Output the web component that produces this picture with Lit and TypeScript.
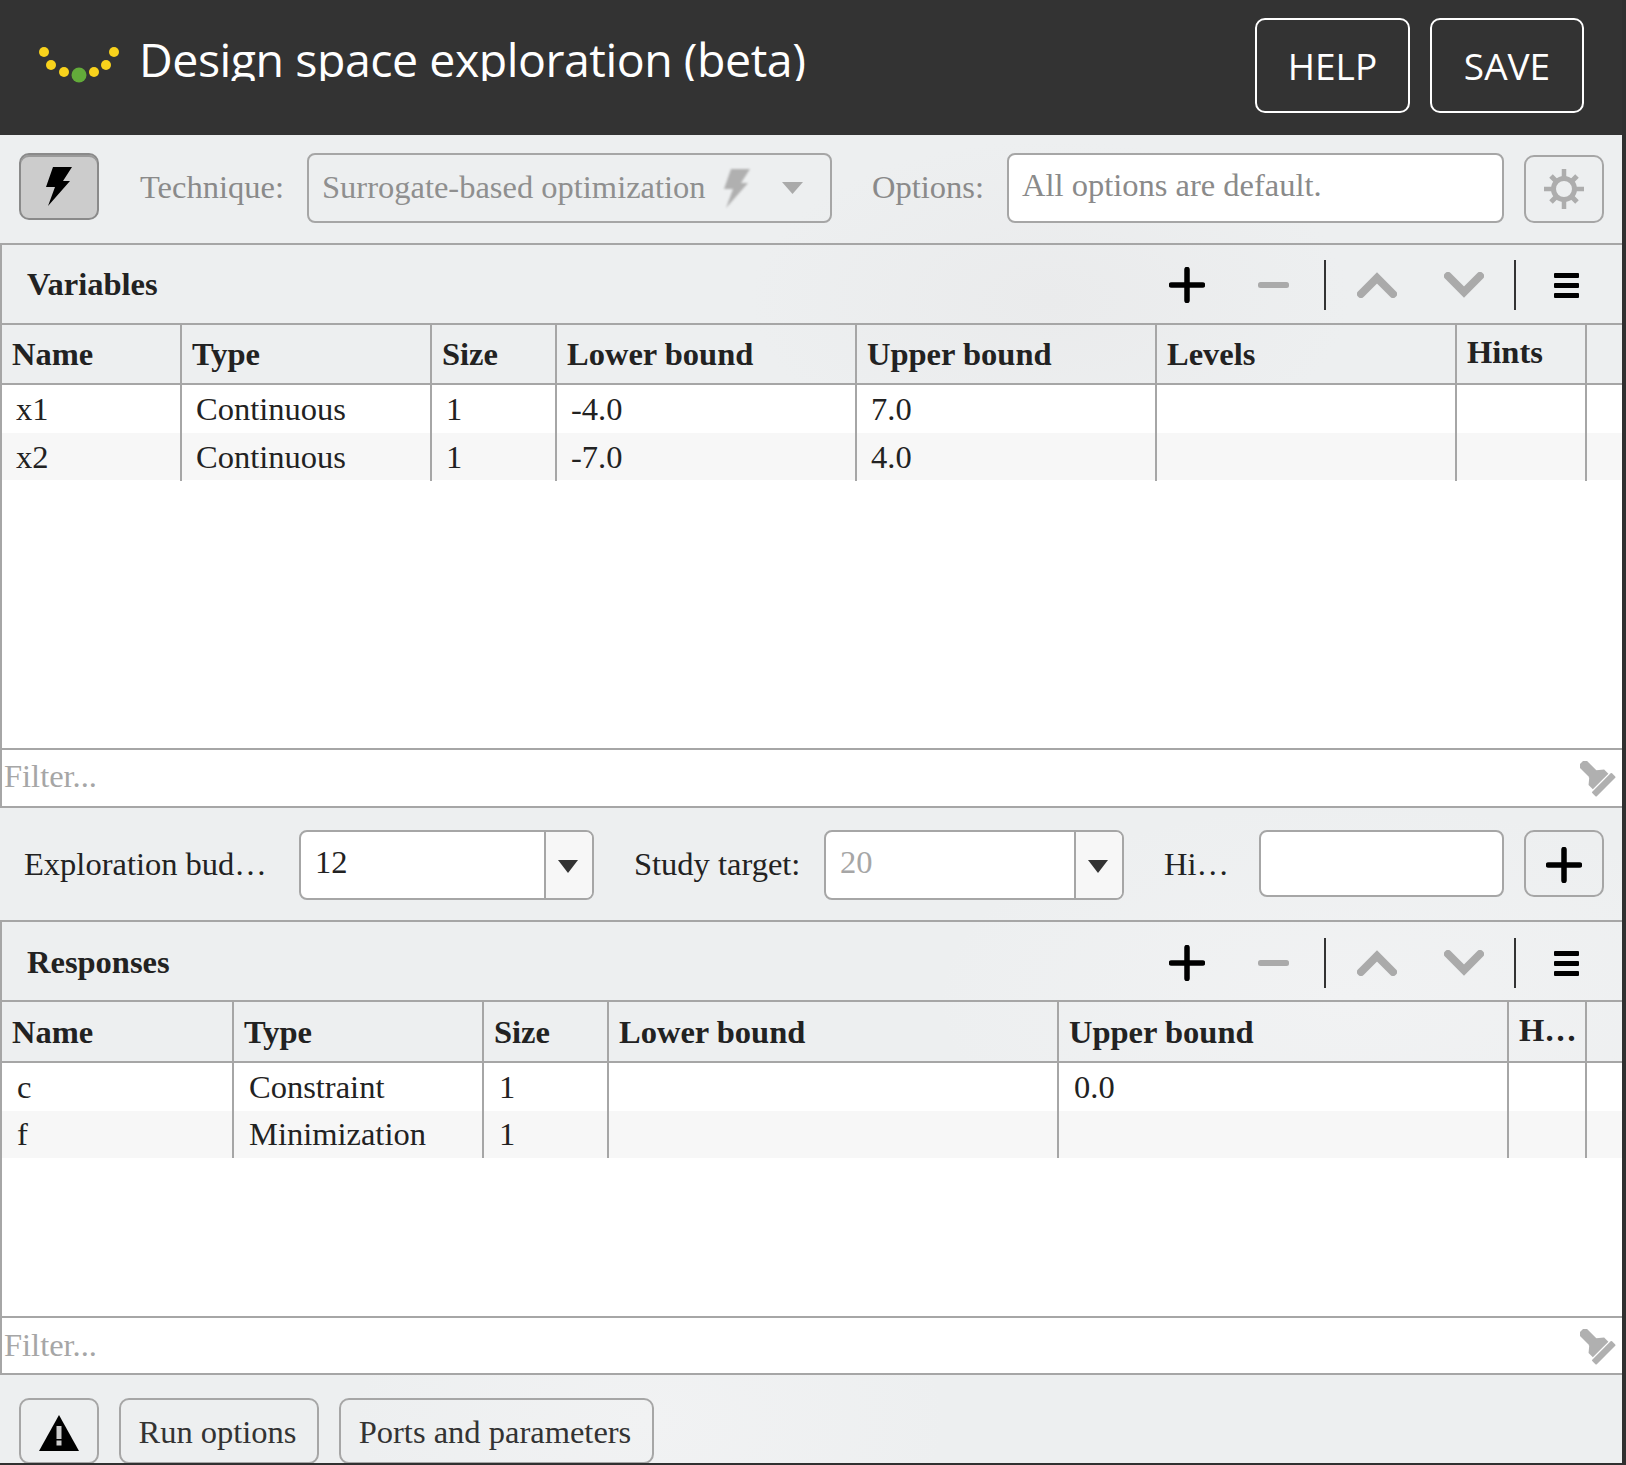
import {LitElement, css, html, svg} from 'lit';
import {customElement} from 'lit/decorators.js';

type Column = {label: string; width: number; raised?: boolean};

const VARIABLE_COLUMNS: Column[] = [
  {label: 'Name', width: 180},
  {label: 'Type', width: 250},
  {label: 'Size', width: 125},
  {label: 'Lower bound', width: 300},
  {label: 'Upper bound', width: 300},
  {label: 'Levels', width: 300},
  {label: 'Hints', width: 130, raised: true},
];

const RESPONSE_COLUMNS: Column[] = [
  {label: 'Name', width: 232},
  {label: 'Type', width: 250},
  {label: 'Size', width: 125},
  {label: 'Lower bound', width: 450},
  {label: 'Upper bound', width: 450},
  {label: 'H…', width: 78, raised: true},
];

const VARIABLE_ROWS = [
  ['x1', 'Continuous', '1', '-4.0', '7.0', '', ''],
  ['x2', 'Continuous', '1', '-7.0', '4.0', '', ''],
];

const RESPONSE_ROWS = [
  ['c', 'Constraint', '1', '', '0.0', ''],
  ['f', 'Minimization', '1', '', '', ''],
];

const bolt = svg`<polygon points="7,0 26,0 17,14 24,14 2,39 9,20 0,20" />`;

@customElement('app-root')
export class AppRoot extends LitElement {
  static styles = css`
    :host {
      display: block;
      width: 1626px;
      height: 1465px;
      overflow: hidden;
      background: #303030;
      font-family: 'Liberation Serif', 'Times New Roman', serif;
      font-size: 32.5px;
      color: #222;
    }

    .app {
      width: 1622px;
      height: 1463px;
      display: flex;
      flex-direction: column;
      overflow: hidden;
      background:
        radial-gradient(ellipse 300px 160px at 1050px 300px, #eaebec, transparent),
        radial-gradient(ellipse 420px 200px at 1350px 1000px, #f1f2f3, transparent),
        radial-gradient(ellipse 300px 180px at 650px 1420px, #f1f2f3, transparent),
        #edeff0;
    }

    /* top bar */
    .header {
      flex: none;
      height: 135px;
      background: #333;
      display: flex;
      align-items: flex-start;
      color: #fff;
    }

    .logo {
      flex: none;
      width: 140px;
      height: 135px;
      margin-right: -1px;
    }

    .title {
      flex: 1;
      margin-top: 31px;
      height: 50px;
      overflow: hidden;
      font-family: 'Open Sans', sans-serif;
      font-size: 46.5px;
      line-height: 56px;
      letter-spacing: -0.48px;
      white-space: nowrap;
    }

    .head-btn {
      flex: none;
      box-sizing: border-box;
      height: 95px;
      margin-top: 18px;
      border: 2px solid #fff;
      border-radius: 10px;
      display: flex;
      align-items: center;
      justify-content: center;
      font-family: 'Open Sans', sans-serif;
      font-size: 37px;
    }

    .help {
      width: 155px;
      margin-right: 20px;
    }

    .save {
      width: 154px;
      margin-right: 38px;
    }

    /* shared form bits */
    .row {
      flex: none;
      display: flex;
      align-items: flex-start;
      box-sizing: border-box;
    }

    .label {
      flex: none;
      height: 69px;
      line-height: 69px;
      white-space: nowrap;
    }

    .muted {
      color: #8a8a8a;
    }

    .box {
      flex: none;
      box-sizing: border-box;
      border: 2px solid #a6a6a6;
      border-radius: 8px;
      background: #fff;
      height: 70px;
      line-height: 60px;
      padding-left: 13px;
      white-space: nowrap;
    }

    .icon-btn {
      flex: none;
      box-sizing: border-box;
      width: 80px;
      height: 67px;
      border: 2px solid #a6a6a6;
      border-radius: 10px;
      display: flex;
      align-items: center;
      justify-content: center;
    }

    .tech-row {
      height: 108px;
      padding: 18px 0 0 19px;
    }

    .active {
      height: 67px;
      background: #ccc;
      border-color: #8a8a8a;
      box-shadow: inset 0 2px 0 #9a9a9a;
      margin-right: 41px;
    }

    .active svg {
      filter: blur(0.6px);
    }

    .tech-bolt {
      filter: blur(1px);
    }

    .tech-label {
      width: 167px;
    }

    .tech-select {
      width: 525px;
      background: transparent;
      color: #8f8f8f;
      display: flex;
      align-items: center;
      padding: 0 0 0 13px;
      line-height: normal;
    }

    .tech-select span {
      padding-bottom: 2px;
    }

    .tech-bolt {
      margin: 0 0 0 18px;
      fill: #b0b0b0;
    }

    .tech-arrow {
      margin-left: 32px;
      fill: #aaa;
      filter: blur(0.5px);
    }

    .opt-label {
      width: 135px;
      margin-left: 40px;
    }

    .opt-input {
      width: 497px;
      color: #8a8a8a;
      margin-right: 20px;
    }

    .gear {
      margin-top: 2px;
      height: 68px;
    }

    .gear svg {
      filter: blur(0.5px);
    }

    /* variables, responses */
    .panel {
      flex: none;
      box-sizing: border-box;
      display: flex;
      flex-direction: column;
      border-top: 2px solid #a6a6a6;
      border-bottom: 2px solid #a6a6a6;
      border-left: 2px solid #a6a6a6;
    }

    .variables {
      height: 565px;
    }

    .responses {
      height: 455px;
    }

    .bar {
      flex: none;
      height: 78px;
      display: flex;
      align-items: center;
      padding: 0 43px 0 25px;
    }

    .bar-title {
      flex: 1;
      font-weight: bold;
    }

    .responses .bar-title {
      padding-top: 2px;
    }

    .bar svg {
      flex: none;
      display: block;
      margin-top: 2px;
    }

    .sep {
      flex: none;
      width: 2px;
      height: 50px;
      margin-top: 2px;
      background: #333;
    }

    .responses .bar svg,
    .responses .sep {
      margin-top: 4px;
    }

    .ml-minus { margin-left: 53px; }
    .ml-sep1 { margin-left: 35px; }
    .ml-up { margin-left: 31px; }
    .ml-down { margin-left: 47px; }
    .ml-sep2 { margin-left: 30px; }
    .ml-menu { margin-left: 38px; }

    .grid {
      display: grid;
    }

    .thead {
      flex: none;
      box-sizing: border-box;
      height: 62px;
      border-top: 2px solid #a6a6a6;
      border-bottom: 2px solid #a6a6a6;
    }

    .responses .thead {
      height: 63px;
    }

    .th {
      box-sizing: border-box;
      border-right: 2px solid #a6a6a6;
      padding-left: 10px;
      font-weight: bold;
      line-height: 58px;
      white-space: nowrap;
      overflow: hidden;
    }

    .th.raised {
      line-height: 54px;
    }

    .responses .th {
      line-height: 60px;
    }

    .responses .th.raised {
      line-height: 56px;
    }

    .tbody {
      flex: 1;
      background: #fff;
    }

    .tr {
      height: 47.5px;
    }

    .tr.alt {
      background: #f7f7f7;
    }

    .td {
      box-sizing: border-box;
      border-right: 2px solid #a6a6a6;
      padding-left: 14px;
      line-height: 48px;
      white-space: nowrap;
    }

    .responses .td {
      padding-left: 15px;
    }

    .responses .alt .td {
      line-height: 46px;
    }

    .filter {
      flex: none;
      height: 58px;
      box-sizing: border-box;
      border-top: 2px solid #a6a6a6;
      background: #fff;
      color: #a6a6a6;
      display: flex;
      align-items: center;
      justify-content: space-between;
      padding: 0 5px 0 2px;
    }

    .filter span {
      padding-bottom: 3px;
    }

    .responses .filter {
      height: 57px;
    }

    .responses .filter span {
      padding-bottom: 0;
    }

    .filter svg {
      margin-top: 3px;
      filter: blur(0.4px);
    }

    /* budget row */
    .mid {
      height: 112px;
      padding: 22px 0 0 24px;
    }

    .combo {
      flex: none;
      box-sizing: border-box;
      height: 70px;
      border: 2px solid #a6a6a6;
      border-radius: 8px;
      overflow: hidden;
      display: flex;
      background: #fff;
    }

    .combo-value {
      flex: 1;
      padding-left: 14px;
      line-height: 60px;
    }

    .combo-arrow {
      flex: none;
      width: 48px;
      box-sizing: border-box;
      border-left: 2px solid #a6a6a6;
      padding-right: 3px;
      background: #f7f7f7;
      display: flex;
      align-items: center;
      justify-content: center;
      fill: #333;
    }

    .combo-arrow svg {
      margin-top: 2px;
      filter: blur(0.4px);
    }

    .budget-label { width: 275px; }
    .budget { width: 295px; }
    .target-label { width: 190px; margin-left: 40px; }
    .target { width: 300px; }
    .target .combo-value { color: #a6a6a6; }
    .hint-label { width: 95px; margin-left: 40px; }

    .hint-input {
      width: 245px;
      height: 67px;
      margin-right: 20px;
    }

    .add {
      padding-top: 2px;
    }

    /* bottom bar */
    .foot {
      flex: 1;
      padding: 23px 0 0 19px;
      gap: 20px;
    }

    .foot-btn {
      flex: none;
      box-sizing: border-box;
      height: 66px;
      padding: 2px 3px 0 0;
      border: 2px solid #a6a6a6;
      border-radius: 10px;
      display: flex;
      align-items: center;
      justify-content: center;
      color: #333;
    }

    .warn { width: 80px; padding: 0; }
    .warn svg { filter: blur(0.5px); margin-top: 3px; }
    .run { width: 200px; }
    .ports { width: 315px; }
  `;

  logo() {
    const dots = [
      [44, 52, 5], [51, 65, 5], [64, 72, 5], [94, 72, 5], [106, 65, 5], [114, 52, 5],
    ];
    return html`<svg class="logo" viewBox="0 0 140 135">
      ${dots.map(d => svg`<circle cx=${d[0]} cy=${d[1]} r=${d[2]} fill="#f8d21c" />`)}
      <circle cx="79" cy="75" r="7.5" fill="#63ab3a" />
    </svg>`;
  }

  plus(size = 36) {
    return html`<svg width=${size} height=${size} viewBox="0 0 36 36" fill="none" stroke="#000" stroke-width="5.5" stroke-linecap="round">
      <path d="M2.5 18H33.5M18 2.5V33.5" />
    </svg>`;
  }

  tools() {
    return html`
      ${this.plus()}
      <svg class="ml-minus" width="31" height="6" viewBox="0 0 31 6"><rect width="31" height="6" rx="2.5" fill="#aaa" /></svg>
      <div class="sep ml-sep1"></div>
      <svg class="ml-up" width="40" height="26" viewBox="0 0 40 26" fill="none" stroke="#aaa" stroke-width="8" stroke-linecap="round" stroke-linejoin="miter">
        <path d="M4 22L20 6L36 22" />
      </svg>
      <svg class="ml-down" width="40" height="26" viewBox="0 0 40 26" fill="none" stroke="#aaa" stroke-width="8" stroke-linecap="round" stroke-linejoin="miter">
        <path d="M4 4L20 20L36 4" />
      </svg>
      <div class="sep ml-sep2"></div>
      <svg class="ml-menu" width="25" height="25" viewBox="0 0 25 25" fill="#000">
        <rect width="25" height="5" rx="1" />
        <rect y="10" width="25" height="5" rx="1" />
        <rect y="20" width="25" height="5" rx="1" />
      </svg>
    `;
  }

  broom() {
    return html`<svg width="37" height="37" viewBox="0 0 37 37">
      <g transform="translate(22 22) rotate(-45)" fill="#b0b0b0">
        <rect x="-5" y="-29" width="10" height="18" rx="2" />
        <polygon points="-5,-13 5,-13 11,-8 11,-2 -11,-2 -11,-8" />
        <rect x="-14" y="-0.8" width="28" height="6.5" rx="1" />
      </g>
    </svg>`;
  }

  panel(cls: string, title: string, columns: Column[], rows: string[][]) {
    const template = columns.map(c => c.width + 'px').join(' ') + ' 1fr';
    return html`
      <section class="panel ${cls}">
        <div class="bar">
          <div class="bar-title">${title}</div>
          ${this.tools()}
        </div>
        <div class="grid thead" style="grid-template-columns: ${template}">
          ${columns.map(c => html`<div class="th ${c.raised ? 'raised' : ''}">${c.label}</div>`)}
        </div>
        <div class="tbody">
          ${rows.map((r, i) => html`
            <div class="grid tr ${i % 2 ? 'alt' : ''}" style="grid-template-columns: ${template}">
              ${r.map(v => html`<div class="td">${v}</div>`)}
            </div>
          `)}
        </div>
        <div class="filter">
          <span>Filter...</span>
          ${this.broom()}
        </div>
      </section>
    `;
  }

  combo(cls: string, value: string) {
    return html`
      <div class="combo ${cls}">
        <div class="combo-value">${value}</div>
        <div class="combo-arrow">
          <svg width="20" height="13" viewBox="0 0 20 13"><path d="M0 0H20L10 13Z" /></svg>
        </div>
      </div>
    `;
  }

  render() {
    return html`
      <div class="app">
        <header class="header">
          ${this.logo()}
          <div class="title">Design space exploration (beta)</div>
          <div class="head-btn help">HELP</div>
          <div class="head-btn save">SAVE</div>
        </header>

        <div class="row tech-row">
          <div class="icon-btn active">
            <svg width="26" height="39" viewBox="0 0 26 39">${bolt}</svg>
          </div>
          <div class="label muted tech-label">Technique:</div>
          <div class="box tech-select">
            <span>Surrogate-based optimization</span>
            <svg class="tech-bolt" width="26" height="39" viewBox="0 0 26 39">${bolt}</svg>
            <svg class="tech-arrow" width="21" height="12" viewBox="0 0 21 12"><path d="M0 0H21L10.5 12Z" /></svg>
          </div>
          <div class="label muted opt-label">Options:</div>
          <div class="box opt-input">All options are default.</div>
          <div class="icon-btn gear">
            <svg width="40" height="40" viewBox="0 0 40 40" fill="none" stroke="#adadad">
              <circle cx="20" cy="20" r="10.5" stroke-width="5" />
              <path stroke-width="4.5" d="M20 0V9M20 31V40M0 20H9M31 20H40" />
              <path stroke-width="5" d="M7 7L12 12M28 28L33 33M33 7L28 12M12 28L7 33" />
            </svg>
          </div>
        </div>

        ${this.panel('variables', 'Variables', VARIABLE_COLUMNS, VARIABLE_ROWS)}

        <div class="row mid">
          <div class="label budget-label">Exploration bud…</div>
          ${this.combo('budget', '12')}
          <div class="label target-label">Study target:</div>
          ${this.combo('target', '20')}
          <div class="label hint-label">Hi…</div>
          <div class="box hint-input"></div>
          <div class="icon-btn add">${this.plus()}</div>
        </div>

        ${this.panel('responses', 'Responses', RESPONSE_COLUMNS, RESPONSE_ROWS)}

        <div class="row foot">
          <div class="foot-btn warn">
            <svg width="40" height="36" viewBox="0 0 40 36">
              <path d="M20 0L40 36H0Z" fill="#000" />
              <rect x="17.5" y="11" width="5" height="13" fill="#ccc" />
              <rect x="17.5" y="25.5" width="5" height="5" fill="#ccc" />
            </svg>
          </div>
          <div class="foot-btn run">Run options</div>
          <div class="foot-btn ports">Ports and parameters</div>
        </div>
      </div>
    `;
  }
}
